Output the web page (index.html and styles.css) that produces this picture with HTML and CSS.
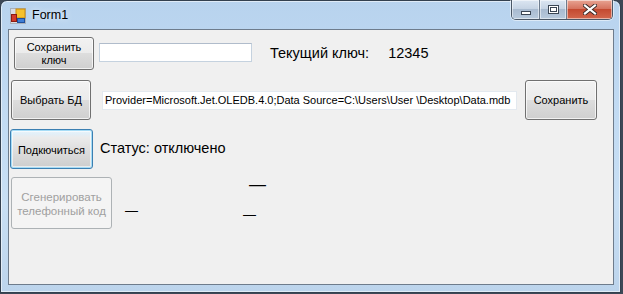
FILE: index.html
```html
<!DOCTYPE html>
<html lang="ru">
<head>
  <meta charset="UTF-8">
  <title>Form1</title>
  <link rel="stylesheet" href="styles.css">
</head>
<body>
  <div class="window">
    <div class="titlebar">
      <svg class="app-icon" width="16" height="16" viewBox="0 0 16 16">
        <rect x="0.5" y="0.5" width="15" height="15" fill="#d9dde3" stroke="#a8b0ba"/>
        <rect x="6" y="1" width="9" height="9" fill="#f6c12c" stroke="#c98b12"/>
        <rect x="1.5" y="6.5" width="5" height="7" fill="#d23a2a" stroke="#8c1c12"/>
        <rect x="7.5" y="10.5" width="7" height="4" fill="#3f7fd6" stroke="#1f4f9a"/>
      </svg>
      <span class="title">Form1</span>
      <div class="caption-buttons">
        <div class="cap-btn cap-min"><span class="min-glyph"></span></div>
        <div class="cap-btn cap-max"><span class="max-glyph"></span></div>
        <div class="cap-btn cap-close">
          <svg width="14" height="11" viewBox="0 0 14 11">
            <path d="M2 1.5 L12 9.5 M12 1.5 L2 9.5" stroke="#3a2a28" stroke-width="4" stroke-linecap="square"/>
            <path d="M2 1.5 L12 9.5 M12 1.5 L2 9.5" stroke="#ffffff" stroke-width="2.2" stroke-linecap="square"/>
          </svg>
        </div>
      </div>
    </div>

    <div class="client">
      <div class="row row-key">
        <button class="btn btn-key">Сохранить<br>ключ</button>
        <input class="textbox tb-key" type="text" value="">
        <span class="label lbl-key">Текущий ключ:</span>
        <span class="label lbl-value">12345</span>
      </div>

      <div class="row row-db">
        <button class="btn btn-db">Выбрать БД</button>
        <input class="textbox tb-db" type="text" value="Provider=Microsoft.Jet.OLEDB.4.0;Data Source=C:\Users\User \Desktop\Data.mdb">
        <button class="btn btn-save">Сохранить</button>
      </div>

      <div class="row row-connect">
        <button class="btn btn-connect focused">Подкючиться</button>
        <span class="label lbl-status">Статус: отключено</span>
      </div>

      <div class="row row-gen">
        <button class="btn btn-gen" disabled>Сгенерировать<br>телефонный код</button>
        <span class="dash dash-one">—</span>
        <div class="dash-group">
          <span class="dash dash-two">—</span>
          <span class="dash dash-three">—</span>
        </div>
      </div>
    </div>
  </div>
</body>
</html>
```

FILE: styles.css
```css
/* Basic reset */
* {
  margin: 0;
  padding: 0;
  box-sizing: border-box;
}

body {
  width: 623px;
  height: 294px;
  overflow: hidden;
  background: #3d4856;
  font-family: "Liberation Sans", Arial, sans-serif;
}

/* Window frame (Aero glass) */
.window {
  width: 621px;
  height: 293px;
  border: 1px solid #33404f;
  border-radius: 7px 7px 0 0;
  background: linear-gradient(180deg, #b8d3ee 0%, #c2dbf3 40%, #c8dff4 70%, #bcd4ec 100%);
  box-shadow: inset 0 0 0 1px rgba(255, 255, 255, 0.55);
  display: flex;
  flex-direction: column;
  padding: 0 6px 7px 7px;
}

.titlebar {
  height: 28px;
  display: flex;
  align-items: flex-start;
}

.app-icon {
  margin: 7px 0 0 2px;
}

.title {
  margin: 7px 0 0 6px;
  font-size: 12.5px;
  color: #000;
  text-shadow: 0 0 6px rgba(255, 255, 255, 0.9);
}

/* Caption buttons */
.caption-buttons {
  margin-left: auto;
  margin-right: 1px;
  display: flex;
  height: 20px;
  margin-top: -1px;
  border: 1px solid #4a5766;
  border-top: none;
  border-radius: 0 0 5px 5px;
  overflow: hidden;
  box-shadow: 0 0 0 1px rgba(255, 255, 255, 0.5);
}

.cap-btn {
  height: 19px;
  display: flex;
  align-items: center;
  justify-content: center;
  background: linear-gradient(180deg, #dce6f2 0%, #c6d4e4 45%, #a9bbd0 50%, #b8cadd 100%);
  box-shadow: inset 0 0 0 1px rgba(255, 255, 255, 0.5);
}

.cap-min {
  width: 28px;
  border-right: 1px solid #6d7c8e;
}

.cap-max {
  width: 27px;
  border-right: 1px solid #6d7c8e;
}

.cap-close {
  width: 45px;
  background: linear-gradient(180deg, #e8a493 0%, #d67460 45%, #c44a31 50%, #d2674d 100%);
}

.min-glyph {
  width: 10px;
  height: 4px;
  margin-top: 6px;
  background: #fff;
  border: 1px solid #3b4654;
}

.max-glyph {
  width: 11px;
  height: 9px;
  border: 1px solid #3b4654;
  background: #fff;
  box-shadow: inset 0 0 0 1px #fff, inset 0 0 0 2px #3b4654;
}

/* Form client area */
.client {
  flex: 1;
  background: #f0f0f0;
  border: 1px solid #6e7c8c;
  display: flex;
  flex-direction: column;
}

.row {
  display: flex;
  align-items: center;
}

.row-key {
  margin-top: 7px;
  padding-left: 5px;
}

.row-db {
  margin-top: 10px;
  padding-left: 2px;
}

.row-connect {
  margin-top: 9px;
  padding-left: 1px;
}

.row-gen {
  margin-top: 8px;
  padding-left: 2px;
  align-items: flex-start;
}

/* Buttons */
.btn {
  font-family: "Liberation Sans", Arial, sans-serif;
  font-size: 11px;
  line-height: 13px;
  color: #000;
  border: 1px solid #707070;
  border-radius: 3px;
  background: linear-gradient(180deg, #f2f2f2 0%, #ebebeb 49%, #dddddd 50%, #cfcfcf 100%);
  box-shadow: inset 0 0 0 1px rgba(255, 255, 255, 0.7);
  text-align: center;
}

.btn-key {
  width: 80px;
  height: 33px;
}

.btn-db {
  width: 80px;
  height: 40px;
}

.btn-save {
  width: 72px;
  height: 40px;
  margin-left: 8px;
}

.btn-connect {
  width: 83px;
  height: 40px;
  padding-top: 2px;
}

.btn.focused {
  border-color: #3c7fb1;
  background: linear-gradient(180deg, #eaf6fd 0%, #e2eff8 10%, #ebebeb 20%, #dddddd 55%, #cdcdcd 100%);
  box-shadow: inset 0 0 0 1px #a6dcf6, inset 0 0 0 2px rgba(255, 255, 255, 0.6);
}

.btn-gen {
  width: 101px;
  height: 52px;
  font-size: 11.5px;
  color: #a0a0a0;
  border-color: #adb2b5;
  background: #f4f4f4;
  box-shadow: none;
  line-height: 14px;
  padding-top: 1px;
}

/* Text boxes */
.textbox {
  height: 19px;
  font-family: "Liberation Sans", Arial, sans-serif;
  font-size: 11px;
  color: #000;
  background: #fff;
  border: 1px solid #c5d2df;
  border-top-color: #b0bccb;
  padding: 0 2px;
  outline: none;
}

.tb-key {
  width: 153px;
  margin-left: 5px;
  margin-top: -2px;
}

.tb-db {
  width: 415px;
  margin-left: 11px;
  border-color: #e3e9ef;
  border-top-color: #e3e9ef;
}

/* Labels */
.label {
  font-size: 14.5px;
  color: #000;
}

.lbl-key {
  margin-left: 18px;
  margin-top: -1px;
}

.lbl-value {
  margin-left: 19px;
  margin-top: -1px;
}

.lbl-status {
  margin-left: 7px;
  margin-top: -2px;
}

.dash {
  font-size: 13px;
  line-height: 15px;
  color: #000;
}

.dash-one {
  margin-left: 13px;
  margin-top: 26px;
}

.dash-group {
  display: flex;
  flex-direction: column;
  align-items: flex-start;
  margin-left: 105px;
}

.dash-two {
  font-size: 17px;
  margin-left: 6px;
  margin-top: 0;
}

.dash-three {
  margin-top: 15px;
}
```
